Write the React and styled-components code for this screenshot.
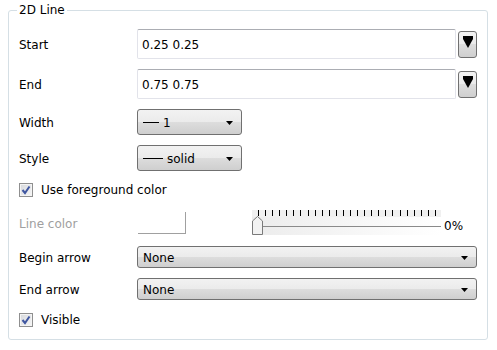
import styled, { createGlobalStyle } from "styled-components";

const GlobalStyle = createGlobalStyle`
    body {
        margin: 0;
        background: #ffffff;
        font-family: "DejaVu Sans", "Liberation Sans", sans-serif;
        font-size: 11px;
        color: #000000;
    }
`;

const GroupBox = styled.section`
    position: relative;
    box-sizing: border-box;
    margin: 10px 0 0 8px;
    width: 480px;
    height: 330px;
    border: 1px solid #d5dfe5;
    border-radius: 3px;
    padding: 18px 10px 0 10px;
    display: flex;
    flex-direction: column;
    gap: 10px;
`;

const GroupTitle = styled.div`
    position: absolute;
    top: -8px;
    left: 8px;
    padding: 0 2px;
    background: #ffffff;
    line-height: 14px;
    font-size: 12px;
`;

const Row = styled.div`
    display: flex;
    align-items: center;
    height: ${(p) => p.$h}px;
`;

const Label = styled.div`
    width: 118px;
    flex-shrink: 0;
    font-size: 12px;
    padding-top: ${(p) => (p.$disabled ? 3 : 1)}px;
    color: ${(p) => (p.$disabled ? "#a0a0a0" : "#000000")};
`;

const TextBox = styled.div`
    box-sizing: border-box;
    width: 320px;
    height: 30px;
    border: 1px solid #e2e3ea;
    border-top-color: #abadb3;
    border-radius: 2px;
    padding: 1px 0 0 4px;
    display: flex;
    align-items: center;
    font-size: 12px;
`;

const DropButton = styled.div`
    box-sizing: border-box;
    width: 19px;
    height: 27px;
    margin-left: 2px;
    border: 1px solid #707070;
    border-radius: 3px;
    background: linear-gradient(#f2f2f2 0%, #ebebeb 50%, #dddddd 50%, #cfcfcf 100%);
    display: flex;
    align-items: center;
    justify-content: center;
    padding-bottom: 4px;
`;

const Combo = styled.div`
    box-sizing: border-box;
    width: ${(p) => p.$w}px;
    height: ${(p) => p.$h}px;
    border: 1px solid #707070;
    border-radius: 3px;
    background: linear-gradient(#f2f2f2 0%, #ebebeb 50%, #dddddd 50%, #cfcfcf 100%);
    display: flex;
    align-items: center;
    padding: 1px 8px 0 5px;
    font-size: 12px;
`;

const ComboText = styled.span`
    flex: 1;
    display: flex;
    align-items: center;
`;

const LineSample = styled.span`
    display: inline-block;
    width: ${(p) => p.$w}px;
    height: 1px;
    background: #000000;
    margin-right: 4px;
`;

const Check = styled.div`
    display: flex;
    align-items: center;
    gap: 8px;
    font-size: 12px;
`;

const Box = styled.div`
    box-sizing: border-box;
    width: 14px;
    height: 14px;
    border: 1px solid #8f8f8f;
    background: linear-gradient(135deg, #d6d8dc, #f6f6f6);
    box-shadow: inset 0 0 0 1px #f4f4f4;
    display: flex;
    align-items: center;
    justify-content: center;
`;

const Swatch = styled.div`
    box-sizing: border-box;
    width: 48px;
    height: 22px;
    margin-left: 1px;
    border-right: 1px solid #a0a0a0;
    border-bottom: 1px solid #a0a0a0;
`;

const Slider = styled.div`
    position: relative;
    width: 189px;
    height: 25px;
    margin-left: 66px;
`;

const Ticks = styled.div`
    height: 7px;
    background: #f0f0f0;
    display: flex;
    justify-content: space-between;
    padding: 0 5px 0 6px;
    align-items: flex-start;
`;

const Tick = styled.span`
    width: 1px;
    height: 6px;
    background: #000000;
`;

const Track = styled.div`
    height: 18px;
    background: linear-gradient(90deg, #ececec, #ffffff);
    display: flex;
    align-items: center;
    padding-left: 5px;
`;

const Groove = styled.div`
    flex: 1;
    height: 1px;
    background: #8a8a8a;
`;

const Handle = styled.svg`
    position: absolute;
    left: 0;
    top: 6px;
`;

const Percent = styled.span`
    margin-left: 3px;
    font-size: 12px;
    padding-top: 6px;
`;

function Arrow() {
    return (
        <svg width="7" height="4" viewBox="0 0 7 4">
            <polygon points="0,0 7,0 3.5,4" fill="#000" />
        </svg>
    );
}

function CheckMark() {
    return (
        <svg width="10" height="10" viewBox="0 0 10 10">
            <path d="M1.5 5 L4 8 L8.5 1.5" fill="none" stroke="#3f56a0" strokeWidth="2" />
        </svg>
    );
}

function PointRow({ label, value }) {
    return (
        <Row $h={30}>
            <Label>{label}</Label>
            <TextBox>{value}</TextBox>
            <DropButton>
                <svg width="10" height="12" viewBox="0 0 10 12">
                    <polygon points="0,0 10,0 10,3 5,12 0,3" fill="#000" />
                </svg>
            </DropButton>
        </Row>
    );
}

export default function App() {
    const ticks = Array.from({ length: 26 });
    return (
        <>
            <GlobalStyle />
            <GroupBox>
                <GroupTitle>2D Line</GroupTitle>
                <PointRow label="Start" value="0.25 0.25" />
                <PointRow label="End" value="0.75 0.75" />
                <Row $h={26}>
                    <Label>Width</Label>
                    <Combo $w={105} $h={26}>
                        <ComboText>
                            <LineSample $w={16} />1
                        </ComboText>
                        <Arrow />
                    </Combo>
                </Row>
                <Row $h={26}>
                    <Label>Style</Label>
                    <Combo $w={105} $h={26}>
                        <ComboText>
                            <LineSample $w={20} />solid
                        </ComboText>
                        <Arrow />
                    </Combo>
                </Row>
                <Row $h={18}>
                    <Check>
                        <Box>
                            <CheckMark />
                        </Box>
                        Use foreground color
                    </Check>
                </Row>
                <Row $h={27}>
                    <Label $disabled>Line color</Label>
                    <Swatch />
                    <Slider>
                        <Ticks>
                            {ticks.map((_, i) => (
                                <Tick key={i} />
                            ))}
                        </Ticks>
                        <Track>
                            <Groove />
                        </Track>
                        <Handle width="11" height="19" viewBox="0 0 11 19">
                            <polygon
                                points="0.5,5 5.5,0.5 10.5,5 10.5,18.5 0.5,18.5"
                                fill="#f2f2f2"
                                stroke="#7a7a7a"
                            />
                        </Handle>
                    </Slider>
                    <Percent>0%</Percent>
                </Row>
                <Row $h={22}>
                    <Label>Begin arrow</Label>
                    <Combo $w={341} $h={22}>
                        <ComboText>None</ComboText>
                        <Arrow />
                    </Combo>
                </Row>
                <Row $h={22}>
                    <Label>End arrow</Label>
                    <Combo $w={341} $h={22}>
                        <ComboText>None</ComboText>
                        <Arrow />
                    </Combo>
                </Row>
                <Row $h={20}>
                    <Check>
                        <Box>
                            <CheckMark />
                        </Box>
                        Visible
                    </Check>
                </Row>
            </GroupBox>
        </>
    );
}
